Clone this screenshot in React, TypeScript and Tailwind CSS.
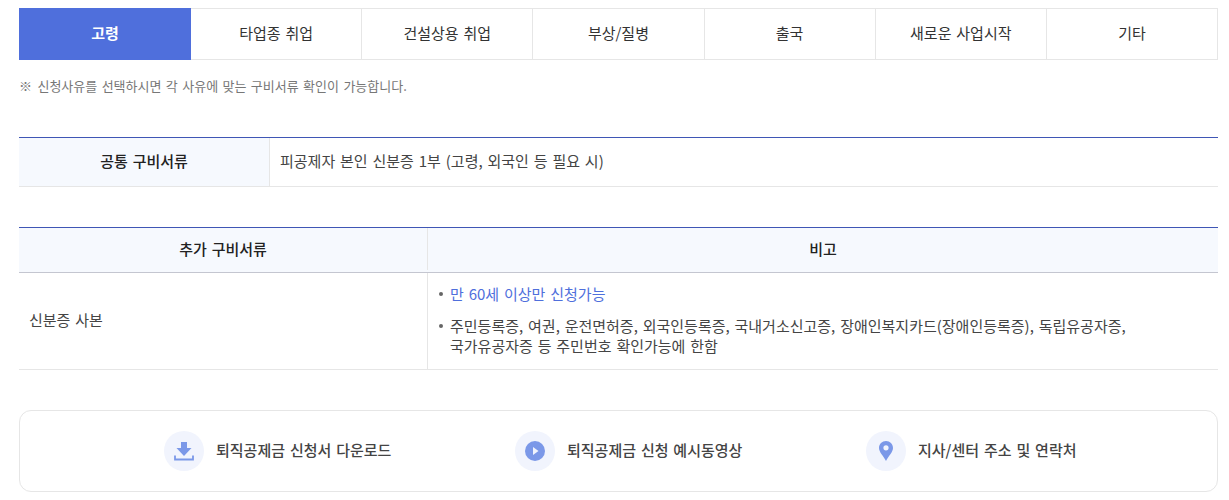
const tabs = ["고령", "타업종 취업", "건설상용 취업", "부상/질병", "출국", "새로운 사업시작", "기타"];

function DownloadIcon() {
  return (
    <svg width="24" height="24" viewBox="0 0 24 24" fill="none">
      <path d="M9 3h6v6h4.5L12 17 4.5 9H9z" fill="#7b98e8" />
      <path d="M3 16.5v4h18v-4" stroke="#7b98e8" strokeWidth="1.8" />
    </svg>
  );
}

function PlayIcon() {
  return (
    <svg width="20" height="20" viewBox="0 0 20 20">
      <circle cx="10" cy="10" r="10" fill="#7b98e8" />
      <path d="M8 6 L13.5 10 L8 14 Z" fill="#f1f4fd" />
    </svg>
  );
}

function PinIcon() {
  return (
    <svg width="14" height="20" viewBox="0 0 14 20">
      <path
        fillRule="evenodd"
        d="M7 0 C3.1 0 0 3 0 6.9 C0 11 4.6 15 7 20 C9.4 15 14 11 14 6.9 C14 3 10.9 0 7 0 Z M7 4.2 A2.6 2.6 0 1 1 7 9.4 A2.6 2.6 0 1 1 7 4.2 Z"
        fill="#7b98e8"
      />
    </svg>
  );
}

function LinkItem({ icon, label }: { icon: React.ReactNode; label: string }) {
  return (
    <a className="flex items-center gap-3">
      <span className="flex h-10 w-10 items-center justify-center rounded-full bg-[#f1f4fd]">{icon}</span>
      <span className="relative -top-[1px] text-[15px] font-medium text-[#444]">{label}</span>
    </a>
  );
}

export default function App() {
  return (
    <div className="h-[500px] w-[1229px] overflow-hidden bg-white pl-[19px] pr-[11px] pt-2 text-[15px] text-[#444] [font-family:'Noto_Sans_CJK_KR','Noto_Sans',sans-serif] [word-spacing:1.5px]">
      <ul className="flex h-[52px]">
        {tabs.map((tab, i) =>
          i === 0 ? (
            <li key={tab} className="flex w-[172px] items-center justify-center bg-[#4f6fdc] pb-[1px] font-bold text-white">
              {tab}
            </li>
          ) : (
            <li
              key={tab}
              className="flex flex-1 items-center justify-center border-y border-r border-[#e6e6e6] pb-[1px] text-[#333]"
            >
              {tab}
            </li>
          ),
        )}
      </ul>

      <p className="mt-[17px] text-[13px] leading-[18px] text-[#777]">
        <span className="mr-[1px]">※</span> 신청사유를 선택하시면 각 사유에 맞는 구비서류 확인이 가능합니다.
      </p>

      <div className="mt-[42px] flex h-[50px] border-b border-t border-b-[#e6e6e6] border-t-[#3f56b5]">
        <div className="flex w-[251px] items-center justify-center border-r border-[#e6e6e6] bg-[#f6f9fe] pb-[2px] font-medium text-[#222]">
          공통 구비서류
        </div>
        <div className="flex flex-1 items-center pb-[2px] pl-[10px]">피공제자 본인 신분증 1부 (고령, 외국인 등 필요 시)</div>
      </div>

      <div className="mt-10 border-t border-[#3f56b5]">
        <div className="flex h-[45px] border-b border-[#c4c6d0] bg-[#f6f9fe] pb-[2px] font-medium text-[#222]">
          <div className="flex w-[409px] items-center justify-center border-r border-[#e6e6e6]">추가 구비서류</div>
          <div className="flex flex-1 items-center justify-center">비고</div>
        </div>
        <div className="flex h-[97px] border-b border-[#e6e6e6]">
          <div className="flex w-[409px] items-center border-r border-[#e6e6e6] pb-[2px] pl-[10px]">신분증 사본</div>
          <ul className="flex-1 pl-[11px] pt-[11px] leading-[20px]">
            <li className="relative pl-[11px] text-[#4f6fdc]">
              <span className="absolute left-0 top-[8px] h-[4px] w-[4px] rounded-full bg-[#666]" />
              만 60세 이상만 신청가능
            </li>
            <li className="relative mt-[12px] pl-[11px]">
              <span className="absolute left-0 top-[8px] h-[4px] w-[4px] rounded-full bg-[#666]" />
              주민등록증, 여권, 운전면허증, 외국인등록증, 국내거소신고증, 장애인복지카드(장애인등록증), 독립유공자증,
              <br />
              국가유공자증 등 주민번호 확인가능에 한함
            </li>
          </ul>
        </div>
      </div>

      <div className="mt-10 flex h-[82px] items-center rounded-[12px] border border-[#e6e6e6] pl-[144px]">
        <div className="w-[351px]">
          <LinkItem icon={<DownloadIcon />} label="퇴직공제금 신청서 다운로드" />
        </div>
        <div className="w-[351px]">
          <LinkItem icon={<PlayIcon />} label="퇴직공제금 신청 예시동영상" />
        </div>
        <LinkItem icon={<PinIcon />} label="지사/센터 주소 및 연락처" />
      </div>
    </div>
  );
}
